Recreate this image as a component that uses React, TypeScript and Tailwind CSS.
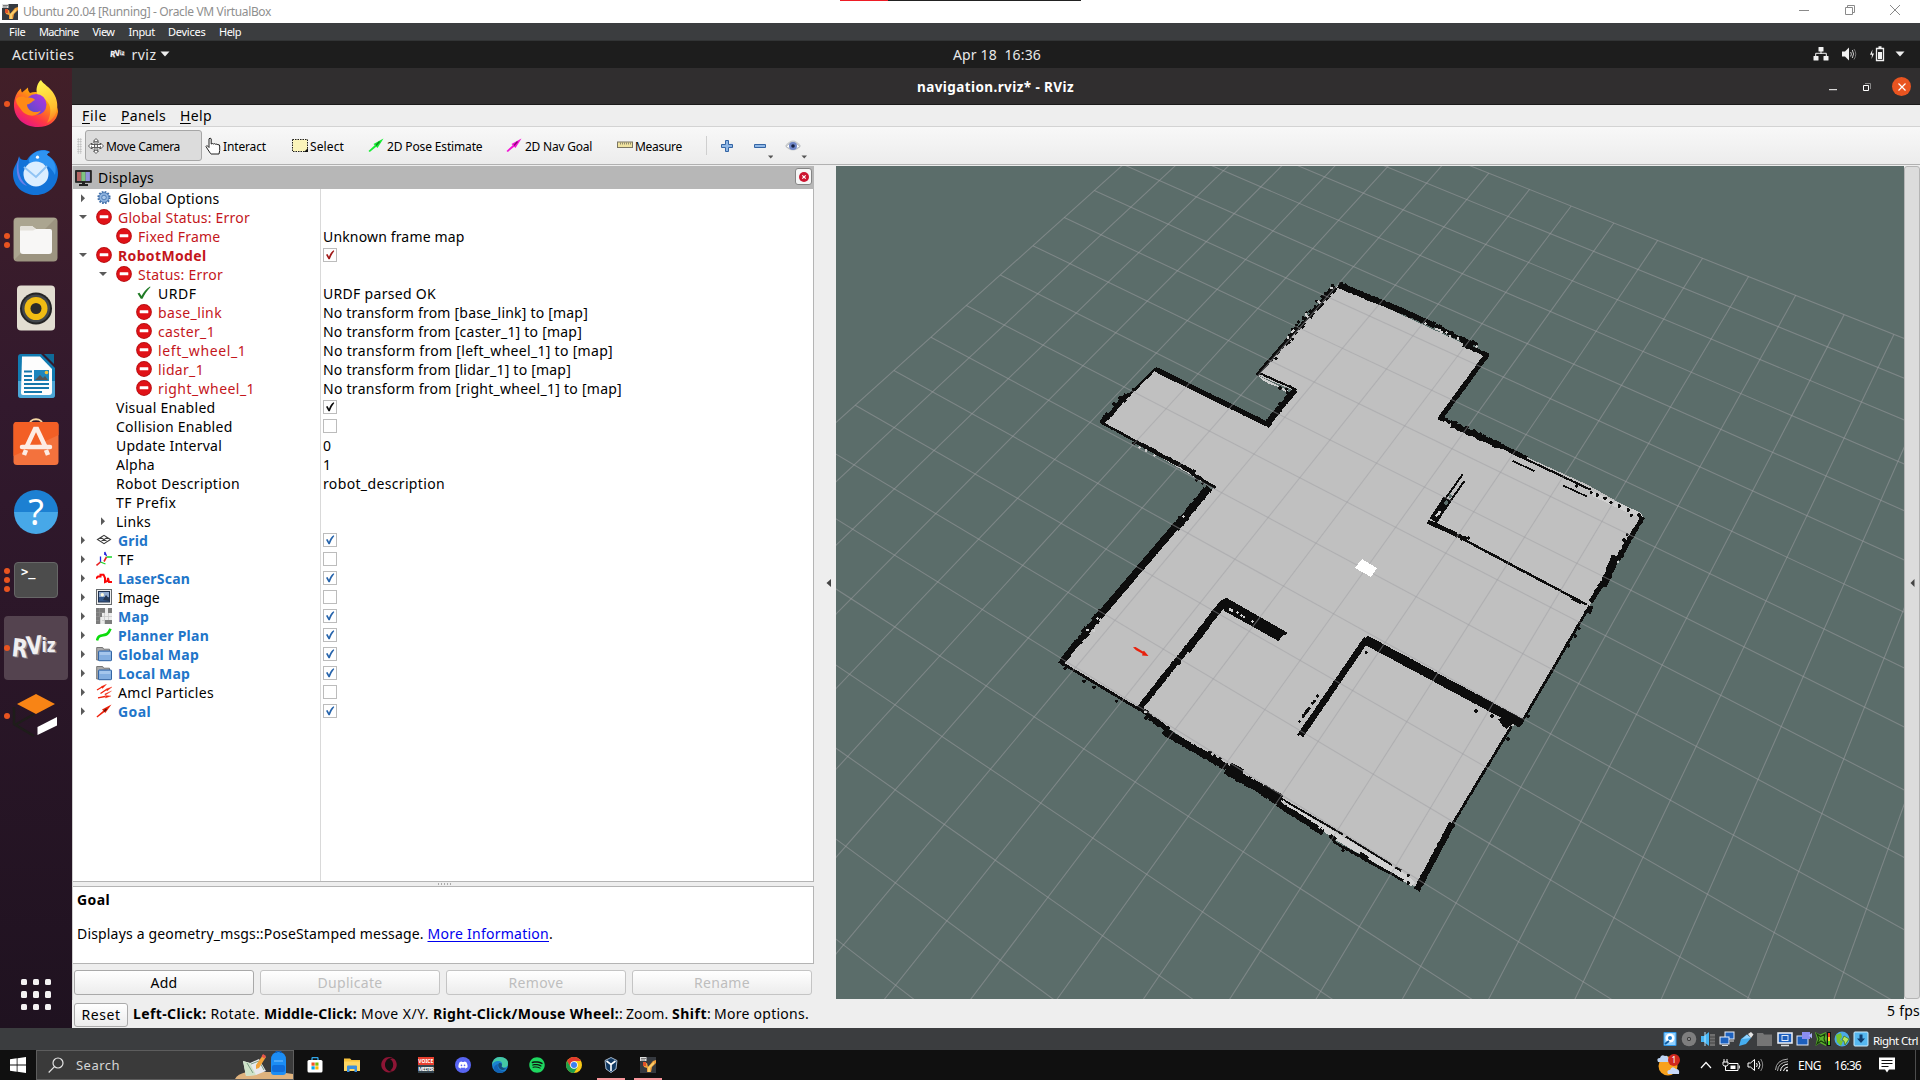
import React, { useLayoutEffect, useRef } from "react";
import { FaOpera, FaSpotify, FaDiscord } from "react-icons/fa";

/** Text that spreads its letters so that it takes exactly `w` pixels. */
function T({ w, className = "", children }: { w: number; className?: string; children: React.ReactNode }) {
  const ref = useRef<HTMLSpanElement>(null);
  useLayoutEffect(() => {
    const el = ref.current;
    if (!el) return;
    const fit = () => {
      el.style.letterSpacing = "0px";
      const natural = el.getBoundingClientRect().width;
      const count = (el.textContent || "").length;
      if (count > 0) el.style.letterSpacing = `${(w - natural) / count}px`;
    };
    fit();
    document.fonts?.ready.then(fit);
  }, [w]);
  return (
    <span ref={ref} className={`inline-block whitespace-pre ${className}`}>
      {children}
    </span>
  );
}

/* ---------------------------------------------------------------- 3D view */

function makeRandom(seed: number) {
  let s = seed;
  return () => {
    s = (s * 1103515245 + 12345) % 2147483648;
    return s / 2147483648;
  };
}

/** Outline of a wall whose two sides are stepped at random. */
function wall(x1: number, y1: number, x2: number, y2: number, w: number, rough = 2, seed = 7) {
  const rnd = makeRandom(seed + Math.round(x1 + y2));
  const len = Math.hypot(x2 - x1, y2 - y1);
  const ux = (x2 - x1) / len;
  const uy = (y2 - y1) / len;
  const steps = Math.max(1, Math.round(len / 10));
  const side = (sign: number) => {
    const pts: string[] = [];
    for (let i = 0; i < steps; i++) {
      const off = sign * (w / 2 + (rnd() - 0.4) * rough);
      for (const k of [i, i + 1]) {
        const d = (k / steps) * len;
        pts.push(`${(x1 + ux * d - uy * off).toFixed(1)},${(y1 + uy * d + ux * off).toFixed(1)}`);
      }
    }
    return pts;
  };
  return [...side(1), ...side(-1).reverse()].join(" ");
}

type Seg = [number, number, number, number, number, number?];

const upperWalls: Seg[] = [
  [895, 75, 1060, 142, 18, 2],
  [1060, 142, 1185, 197, 17, 3],
  [1185, 197, 1300, 256, 14, 6],
  [1270, 254, 1345, 287, 11, 3],
  [886, 80, 773, 208, 13, 8],
  [773, 203, 733, 253, 12, 6],
  [740, 243, 650, 346, 11, 2],
  [660, 340, 770, 390, 6, 1],
  [764, 390, 678, 498, 18, 4],
  [345, 327, 682, 493, 15, 1],
  [347, 326, 262, 410, 7, 2],
  [268, 400, 185, 488, 15, 6],
  [183, 487, 290, 545, 7, 1],
  [285, 544, 465, 639, 12, 3],
  [455, 640, 527, 683, 9, 3],
  [508, 683, 405, 805, 23, 5],
  [412, 793, 180, 1066, 22, 1],
  [188, 1053, 108, 1155, 21, 7],
  [118, 1140, 61, 1212, 18, 2],
  [1342, 283, 1201, 475, 15, 1],
];
const rightWalls: Seg[] = [
  [176, 110, 230, 134, 12, 6],
  [215, 132, 360, 198, 18, 5],
  [350, 192, 440, 235, 12, 3],
  [430, 234, 632, 329, 6, 1],
  [398, 243, 463, 273, 5, 0],
  [548, 316, 622, 350, 5, 0],
  [248, 283, 190, 365, 6, 0],
  [254, 302, 212, 362, 6, 0],
  [203, 356, 160, 422, 26, 1],
  [143, 425, 230, 464, 13, 2],
  [225, 462, 258, 482, 9, 5],
  [250, 478, 620, 674, 7, 1],
  [575, 655, 605, 668, 10, 2],
  [789, 411, 735, 500, 14, 3],
  [742, 485, 715, 540, 15, 5],
  [708, 528, 670, 618, 23, 4],
  [670, 605, 632, 666, 15, 3],
  [630, 677, 624, 700, 15, 4],
  [625, 684, 420, 1036, 8, 1],
];
const lowerWalls: Seg[] = [
  [976, 239, 1444, 490, 28, 1],
  [1385, 470, 1410, 498, 30, 4],
  [980, 236, 782, 526, 19, 1],
  [1415, 498, 1235, 796, 8, 1],
  [1237, 790, 1130, 990, 19, 2],
  [552, 125, 440, 272, 22, 2],
  [445, 260, 295, 449, 18, 2],
  [60, 306, 300, 450, 8, 1],
  [300, 446, 400, 524, 14, 7],
  [370, 513, 560, 622, 21, 3],
  [558, 627, 722, 722, 29, 5],
  [570, 616, 608, 636, 18, 2],
  [668, 684, 725, 716, 24, 2],
  [712, 730, 850, 817, 18, 3],
  [720, 714, 910, 824, 6, 0],
  [918, 830, 1056, 915, 6, 0],
  [1066, 922, 1084, 932, 7, 1],
  [870, 825, 885, 842, 13, 3],
  [880, 845, 1090, 962, 8, 2],
  [958, 882, 982, 900, 16, 3],
];

const upperSpecks = [
  [878, 76], [868, 92], [905, 70], [917, 74], [858, 100], [846, 110], [830, 124], [826, 140], [812, 152], [800, 158],
  [790, 174], [776, 186], [770, 196], [757, 210], [752, 224], [758, 238], [748, 248], [708, 296], [1308, 252], [1300, 246],
  [280, 388], [262, 406], [240, 414], [222, 432], [200, 462], [184, 484], [282, 550], [470, 660], [488, 671], [420, 772],
  [416, 1210], [720, 384], [740, 388], [750, 380], [742, 398], [128, 1136], [74, 1226], [979, 1178], [720, 432], [704, 456],
];
const upperLight = [
  [836, 124], [838, 128], [802, 170], [798, 164], [760, 212], [756, 216], [744, 232], [1156, 190], [1190, 207], [1198, 210], [1205, 216], [1220, 218],
  [1230, 230], [1254, 236], [1310, 260], [298, 562], [318, 571], [344, 586], [430, 770], [172, 1076], [142, 1110], [162, 1112], [875, 84],
];
const rightSpecks = [
  [652, 345], [675, 355], [693, 368], [718, 378], [745, 390], [754, 406], [777, 405], [634, 338], [590, 318], [742, 464],
  [732, 480], [262, 142], [282, 152], [302, 162], [240, 468], [256, 474], [266, 474], [598, 746], [586, 768], [566, 800],
  [445, 1010], [288, 993], [336, 1008], [384, 1076], [564, 795],
];
const lowerSpecks = [
  [979, 278], [833, 408], [779, 485], [790, 468], [796, 460], [801, 453], [807, 446], [818, 430], [823, 424], [776, 524],
  [76, 326], [132, 364], [162, 382], [230, 424], [318, 474], [510, 577], [524, 588], [540, 596], [1307, 453], [1356, 467],
  [1465, 469], [1404, 537], [1105, 946], [1105, 969], [909, 872], [736, 220], [418, 310], [1231, 797],
];
const lowerLight = [
  [570, 148], [576, 151], [592, 158], [605, 167], [612, 171], [637, 184], [730, 724], [316, 456], [838, 802], [848, 806], [856, 812],
];

function Specks({ at, fill, size = 8 }: { at: number[][]; fill: string; size?: number }) {
  return (
    <g fill={fill}>
      {at.map(([x, y], i) => (
        <path key={i} d={`M${x - size / 2} ${y - size / 4}h${size / 4}v${-size / 4}h${size / 2}v${size / 4}h${size / 4}v${size / 2}h${-size / 4}v${size / 4}h${-size / 2}v${-size / 4}h${-size / 4}z`} />
      ))}
    </g>
  );
}

function Walls({ list }: { list: Seg[] }) {
  return (
    <g fill="#0d0d0d">
      {list.map((s, i) => (
        <polygon key={i} points={wall(s[0], s[1], s[2], s[3], s[4], s[5])} />
      ))}
    </g>
  );
}

/** Crossing of grid line n (up-right) with grid line m (down-right). */
function crossing(n: number, m: number) {
  const xb = 1402.4 + 86.3 * n;
  const sb = -0.559 + 0.0396 * n;
  const xa = 1471.5 + 139.5 * m;
  const sa = 1.55 + 0.0642 * m;
  const t = (xb - xa) / (sa - sb);
  return [xb + sb * t, 999 + t];
}

function View3D() {
  const lines: number[][] = [];
  for (let n = -14; n <= 6; n++) lines.push([...crossing(n, -5), ...crossing(n, 15)]);
  for (let m = -5; m <= 15; m++) lines.push([...crossing(-14, m), ...crossing(6, m)]);
  return (
    <svg viewBox="836 166 1068 833" className="block h-[833px] w-[1068px] bg-[#5b6d6a]">
      <g shapeRendering="crispEdges">
        <polygon
          fill="#c0c0c0"
          points="1338,285 1488,355 1441,418 1588,485 1643,516 1589,607 1520,723 1510,727 1417,888 1280,802 1227,768 1140,709 1061,662 1213,488 1102,423 1156,369 1266,426 1295,391 1257,375"
        />
        <g transform="translate(1040 260) scale(0.33333)">
          <polygon fill="#cfcfcf" points="652,346 745,392 740,398 712,380 698,375 690,373 670,362" />
          <Walls list={upperWalls} />
          <Specks at={upperSpecks} fill="#0d0d0d" size={10} />
          <Specks at={upperLight} fill="#cfcfcf" />
        </g>
        <g transform="translate(1380 380) scale(0.33333)">
          <polygon fill="#cfcfcf" points="632,332 700,361 780,397 790,410 760,406 640,350" />
          <Walls list={rightWalls} />
          <Specks at={rightSpecks} fill="#0d0d0d" size={10} />
          <Specks at={[[179, 396], [170, 406], [176, 402], [714, 546]]} fill="#d0d0d0" />
          <Specks at={[[198, 369], [200, 366], [211, 348]]} fill="#5b6d6a" size={10} />
        </g>
        <g transform="translate(1040 560) scale(0.33333)">
          <polygon fill="#d2d2d2" points="738,728 1100,945 1126,968 1114,979 1040,930 880,836 850,814 745,742" />
          <polygon fill="#0d0d0d" points="545,120 560,114 742,218 728,228 715,243 552,152" />
          <Walls list={lowerWalls} />
          <Specks at={lowerSpecks} fill="#0d0d0d" size={10} />
          <Specks at={lowerLight} fill="#d2d2d2" />
        </g>
      </g>
      <g stroke="#a0a0a4" strokeOpacity="0.5" strokeWidth="1.1">
        {lines.map(([x1, y1, x2, y2], i) => (
          <line key={i} x1={x1} y1={y1} x2={x2} y2={y2} />
        ))}
      </g>
      <polygon fill="#fff" points="1362,559 1377,568 1371,577 1355,568" shapeRendering="crispEdges" />
      <path d="M1133 647.300l2.500-.3 7.500 4.500 1-.8 4.500 5.300-6.500-.4.600-1.800-6.500-3.600z" fill="#e8200c" />
    </svg>
  );
}

/* ------------------------------------------------------------- tree icons */

function ErrorIcon() {
  return (
    <svg viewBox="0 0 16 16" className="size-4">
      <circle cx="8" cy="8" r="7.900" fill="#b80d10" />
      <circle cx="8" cy="8" r="7" fill="#e01217" />
      <rect x="3.700" y="6.300" width="8.600" height="3" rx=".5" fill="#fff" />
    </svg>
  );
}
const treeIcons: Record<string, React.ReactNode> = {
  error: <ErrorIcon />,
  gear: (
    <svg viewBox="0 0 16 16" className="size-4">
      <circle cx="8" cy="7.500" r="5.600" fill="none" stroke="#3f6ea9" strokeWidth="2" strokeDasharray="1.700 1.230" />
      <circle cx="8" cy="7.500" r="4.900" fill="#8fb4e0" stroke="#3f6ea9" strokeWidth=".8" />
      <circle cx="8" cy="7.500" r="2.300" fill="#a9c7ea" stroke="#3f6ea9" strokeWidth=".8" />
    </svg>
  ),
  ok: (
    <svg viewBox="0 0 16 16" className="size-4">
      <path d="M1.500 8.500l2-.8 2 3.300C7.500 7 10 4 14 1.500l.5.500C10.800 6 8.500 9.500 6.500 13.800H4.800z" fill="#1f7a25" />
    </svg>
  ),
  grid: (
    <svg viewBox="0 0 16 16" className="size-4" fill="none" stroke="#3d3d3d" strokeWidth="1.100">
      <path d="M1.500 7.500L8 3.300l6.500 4.200L8 11.700zM4.700 5.400l6.600 4.200M11.300 5.400L4.700 9.600" />
    </svg>
  ),
  tf: (
    <svg viewBox="0 0 16 16" className="size-4" fill="none" strokeWidth="1.300">
      <path d="M4.500 11V5.500M10.500 5L8.800 1v3" stroke="#2222e0" />
      <path d="M4.500 11l-4 3.500M10.500 6L8 10.500" stroke="#e82020" strokeWidth="1.600" />
      <path d="M4.500 11l5 2M10.500 6H16" stroke="#19d52a" />
    </svg>
  ),
  laser: (
    <svg viewBox="0 0 16 16" className="size-4" fill="none" stroke="#fb0707" strokeWidth="2">
      <path d="M0 8.500l2-2h2.500v-1.800h3L9 8v4l2.500-1 .5-3 1 4h3" />
    </svg>
  ),
  image: (
    <svg viewBox="0 0 16 16" className="size-4">
      <rect x=".5" y=".5" width="15" height="15" fill="#eee" stroke="#666a6c" />
      <rect x="2.500" y="2.500" width="11" height="10.500" fill="#35588c" stroke="#20324f" />
      <rect x="3" y="3" width="10" height="5" fill="#91abd0" />
      <circle cx="6.300" cy="5.800" r="1.700" fill="#fffce0" />
      <path d="M7 11l3-5 3 3.500V12z" fill="#27374f" />
    </svg>
  ),
  map: (
    <svg viewBox="0 0 16 16" className="size-4" shapeRendering="crispEdges">
      <path d="M9 0h4v4H9zM6 4h10v4H6zM4 8h12v4H4zM4 12h6v4H4z" fill="#ececec" />
      <path d="M4 8v8M8 4v12M12 4v12M4 8h12M6 12h10" stroke="#c4c4c4" strokeWidth=".7" />
      <path d="M0 0h9v5H6v4H4v7H0zM12 0h4v5h-4zM9 12h7v4H9z" fill="#7c7c7c" />
      <path d="M3 0v8M0 4h9M0 8h4M0 12h3" stroke="#969696" strokeWidth=".6" />
    </svg>
  ),
  path: (
    <svg viewBox="0 0 16 16" className="size-4" fill="none" stroke="#0ddc0d" strokeWidth="2.600">
      <path d="M1 13.500C2 9 4 8.700 7 8.200s5-.5 7.500-6.500" />
    </svg>
  ),
  folder: (
    <svg viewBox="0 0 16 16" className="size-4">
      <path d="M.7 14V1.500h6l1 1.700h5.800V14z" fill="#aaa" stroke="#777" />
      <rect x="2.500" y="5" width="13" height="9.700" rx=".6" fill="#83aee0" stroke="#3465a4" />
      <rect x="3.500" y="6" width="11" height="3" fill="#a5c6ec" />
    </svg>
  ),
  particles: (
    <svg viewBox="0 0 16 16" className="size-4" stroke="#f0210b" strokeWidth="1.300" fill="#f0210b">
      <path d="M1 6L6 3M4.500 9.500l6-4M2 13.800l7-1.300" />
      <path d="M10.500.3L6.500 4.500 5.300 2.500zM16 3l-5 4-1-2zM15 12l-5.500 2-.2-2.500zM15.500 7l-6 4-.8-1z" strokeWidth=".3" />
    </svg>
  ),
  goal: (
    <svg viewBox="0 0 16 16" className="size-4">
      <path d="M.5 13.500l7-6 1.300 1.300-7.500 5.700z" fill="#f0210b" />
      <path d="M6 6.500l9.500-5L9.300 10z" fill="#e81f08" />
      <path d="M8 8.500l2.500-2.500" stroke="#53150c" strokeWidth="1.400" />
    </svg>
  ),
};

function Arrow({ open }: { open: boolean }) {
  return (
    <svg viewBox="0 0 10 10" className="size-[10px]">
      {open ? <path d="M1 3h8L5 7z" fill="#5a5a5a" /> : <path d="M3 1.200v8L7 5.200z" fill="#5a5a5a" />}
    </svg>
  );
}

function Check({ on, color = "#2563ab" }: { on: boolean; color?: string }) {
  return (
    <span className="mb-px flex size-[14px] items-center justify-center border border-[#bcbcbc] bg-white">
      {on && (
        <svg viewBox="0 0 12 12" className="size-3">
          <path d="M2 5.700l1.500-.8L5 7.700C6 5 7.300 3 9.500 1.300L10.300 2C8.300 4.500 7 7 5.800 10.200H4.500z" fill={color} />
        </svg>
      )}
    </span>
  );
}

type Row = {
  d: number;
  a?: "o" | "c";
  i?: string;
  t: string;
  w: number;
  c?: "red" | "blue";
  b?: boolean;
  v?: string;
  vw?: number;
  k?: "on" | "off" | "red" | "black";
};
const rows: Row[] = [
  { d: 0, a: "c", i: "gear", t: "Global Options", w: 101.500 },
  { d: 0, a: "o", i: "error", t: "Global Status: Error", w: 132, c: "red" },
  { d: 1, i: "error", t: "Fixed Frame", w: 82.500, c: "red", v: "Unknown frame map", vw: 141.500 },
  { d: 0, a: "o", i: "error", t: "RobotModel", w: 88.500, c: "red", b: true, k: "red" },
  { d: 1, a: "o", i: "error", t: "Status: Error", w: 85, c: "red" },
  { d: 2, i: "ok", t: "URDF", w: 38.500, v: "URDF parsed OK", vw: 113 },
  { d: 2, i: "error", t: "base_link", w: 64, c: "red", v: "No transform from [base_link] to [map]", vw: 265 },
  { d: 2, i: "error", t: "caster_1", w: 57, c: "red", v: "No transform from [caster_1] to [map]", vw: 259 },
  { d: 2, i: "error", t: "left_wheel_1", w: 88.500, c: "red", v: "No transform from [left_wheel_1] to [map]", vw: 290 },
  { d: 2, i: "error", t: "lidar_1", w: 46, c: "red", v: "No transform from [lidar_1] to [map]", vw: 248 },
  { d: 2, i: "error", t: "right_wheel_1", w: 97, c: "red", v: "No transform from [right_wheel_1] to [map]", vw: 299 },
  { d: 1, t: "Visual Enabled", w: 99.500, k: "black" },
  { d: 1, t: "Collision Enabled", w: 116.500, k: "off" },
  { d: 1, t: "Update Interval", w: 106, v: "0", vw: 8.500 },
  { d: 1, t: "Alpha", w: 39, v: "1", vw: 8.500 },
  { d: 1, t: "Robot Description", w: 124, v: "robot_description", vw: 122 },
  { d: 1, t: "TF Prefix", w: 60.500 },
  { d: 1, a: "c", t: "Links", w: 35 },
  { d: 0, a: "c", i: "grid", t: "Grid", w: 30, c: "blue", b: true, k: "on" },
  { d: 0, a: "c", i: "tf", t: "TF", w: 16, k: "off" },
  { d: 0, a: "c", i: "laser", t: "LaserScan", w: 72, c: "blue", b: true, k: "on" },
  { d: 0, a: "c", i: "image", t: "Image", w: 41.500, k: "off" },
  { d: 0, a: "c", i: "map", t: "Map", w: 31, c: "blue", b: true, k: "on" },
  { d: 0, a: "c", i: "path", t: "Planner Plan", w: 91, c: "blue", b: true, k: "on" },
  { d: 0, a: "c", i: "folder", t: "Global Map", w: 81, c: "blue", b: true, k: "on" },
  { d: 0, a: "c", i: "folder", t: "Local Map", w: 72, c: "blue", b: true, k: "on" },
  { d: 0, a: "c", i: "particles", t: "Amcl Particles", w: 96, k: "off" },
  { d: 0, a: "c", i: "goal", t: "Goal", w: 33, c: "blue", b: true, k: "on" },
];

function TreeRow({ r }: { r: Row }) {
  const indent = ["w-0", "w-5", "w-10"][r.d];
  const color = r.c === "red" ? "text-[#c4161c]" : r.c === "blue" ? "text-[#2175c9]" : "text-black";
  return (
    <div className="flex h-[19px] items-center">
      <div className="flex h-[19px] w-[247px] shrink-0 items-center pl-[5px]">
        <span className={`${indent} shrink-0`} />
        <span className="flex w-[18px] shrink-0 pb-px">{r.a && <Arrow open={r.a === "o"} />}</span>
        {r.i ? <span className="mr-[6px] shrink-0 pb-[2px]">{treeIcons[r.i]}</span> : null}
        <T w={r.w} className={`${color} ${r.b ? "font-bold" : ""}`}>{r.t}</T>
      </div>
      <div className="flex h-[19px] items-center pl-[3px]">
        {r.v && <T w={r.vw || 0}>{r.v}</T>}
        {r.k && <Check on={r.k !== "off"} color={r.k === "red" ? "#a01818" : r.k === "black" ? "#0a0a0a" : "#2563ab"} />}
      </div>
    </div>
  );
}

/* -------------------------------------------------------------- dock icons */

function RvizLetters({ fill }: { fill: string }) {
  return (
    <g fill={fill}>
      <text x="0" y="25" fontSize="25" textLength="16" lengthAdjust="spacingAndGlyphs" transform="rotate(6 8 16)">R</text>
      <text x="14.500" y="22" fontSize="25" textLength="16" lengthAdjust="spacingAndGlyphs" transform="rotate(-6 22 16)">V</text>
      <text x="29.500" y="20" fontSize="19" textLength="14" lengthAdjust="spacingAndGlyphs">iz</text>
    </g>
  );
}

function RvizLogo({ className }: { className: string }) {
  return (
    <svg viewBox="0 -2 48 36" className={className} fontFamily="'DejaVu Sans Condensed','DejaVu Sans'" fontWeight="700">
      <g transform="translate(1.500 1)"><RvizLetters fill="#8b838c" /></g>
      <RvizLetters fill="#f1f0f1" />
    </svg>
  );
}

const dock: { dots: number; active?: boolean; icon: React.ReactNode }[] = [
  {
    dots: 1,
    icon: (
      <svg viewBox="0 0 48 48" className="size-12">
        <defs>
          <linearGradient id="ff" x1="1" y1="0" x2=".3" y2="1">
            <stop offset="0" stopColor="#fff44f" /><stop offset=".4" stopColor="#ff980e" /><stop offset=".75" stopColor="#ff3647" /><stop offset="1" stopColor="#e31587" />
          </linearGradient>
          <linearGradient id="ffy" x1=".4" y1="0" x2=".6" y2="1">
            <stop offset="0" stopColor="#fff44f" /><stop offset=".7" stopColor="#ffbd2e" /><stop offset="1" stopColor="#ff7b22" />
          </linearGradient>
          <linearGradient id="ffp" x1="1" y1="0" x2="0" y2="1">
            <stop offset="0" stopColor="#b833e1" /><stop offset="1" stopColor="#4b50c8" />
          </linearGradient>
        </defs>
        <path d="M2 23C3 15 6 11 9 8.500c0 2 .5 3 1 4l6-5c0 2.500.5 4 2 5.500 5-2 13-1 19 5 6 4 9 9 9 14-1 9-9 15-20 15C11 47 1 37 2 23z" fill="url(#ff)" />
        <path d="M29 0c2 4 9 7 13 14 6 10 4 23-7 29 3-6 4-11 3-16-2-8-8-9-12-12-3-4-1-12 3-15z" fill="url(#ffy)" />
        <circle cx="24" cy="24.500" r="10.500" fill="url(#ffp)" />
        <path d="M4 19c3-3 7-3 10-1 4-1 8 0 9 2-3 1-4 4-8 4.500 0 6 8 10 14 6-3 7-15 7-20-1-3-4-5-6-5-10.500z" fill="#ff8a16" />
      </svg>
    ),
  },
  {
    dots: 0,
    icon: (
      <svg viewBox="0 0 48 48" className="mt-[2px] size-12">
        <path d="M7 7c1 4 4 4 8 4C21 1 32-1 38 3c-2 1-3 2-3 3 8 4 11 12 11 18 0 13-10 22-22 22S1 38 1 25C1 17 6 14 7 7z" fill="#1273d8" />
        <path d="M18 8c5-7 14-8 20-5-2 1-3 2-3 3 8 5 10 12 8 20C38 15 30 14 22 16c-4-1-7-3-4-8z" fill="#2e94f2" />
        <path d="M7 8c-1 9-2 20 8 29-9-3-13-14-8-29z" fill="#6a7ee8" />
        <circle cx="24" cy="25" r="12.500" fill="#dbeeff" />
        <path d="M12 18l12 10 11-11" fill="none" stroke="#90c4f4" strokeWidth="2" />
        <circle cx="25.500" cy="8.200" r="1.600" fill="#fff" />
      </svg>
    ),
  },
  {
    dots: 2,
    icon: (
      <svg viewBox="0 0 46 46" className="size-[46px]">
        <rect x=".5" y=".5" width="44" height="44" rx="4" fill="#9c9480" />
        <path d="M1 5a4 4 0 014-4h38L1 43z" fill="#aba590" />
        <path d="M7 34V11q0-2 2-2h10l4 3h14q2 0 2 2v20q0 3-3 3H10q-3 0-3-3z" fill="#f8f7f6" />
        <path d="M7 34V11q0-2 2-2h10l4 3-3 1.500H7z" fill="#e4e1da" />
      </svg>
    ),
  },
  {
    dots: 0,
    icon: (
      <svg viewBox="0 0 46 46" className="size-[46px]">
        <rect x="4" y=".5" width="38" height="45" rx="4" fill="#e2ddd1" />
        <circle cx="23" cy="23.500" r="16" fill="#242424" />
        <circle cx="23" cy="23.500" r="14" fill="#42474c" />
        <circle cx="23" cy="23.500" r="11.500" fill="#f0bc13" />
        <circle cx="23" cy="23.500" r="5.500" fill="#2b2b2b" />
      </svg>
    ),
  },
  {
    dots: 0,
    icon: (
      <svg viewBox="0 0 46 46" className="size-[46px]">
        <path d="M8 1h20l14 14v27q0 3-3 3H8q-3 0-3-3V4q0-3 3-3z" fill="#117bb1" />
        <path d="M5 28h37v14q0 3-3 3H8q-3 0-3-3z" fill="#4ba6d6" />
        <path d="M9 3.500h18L39 16v23q0 3-3 3H10q-2 0-2-2z" fill="#fdfdfd" />
        <path d="M31 1h10v10z" fill="#0f6a98" />
        <path d="M11 18.500h8M11 23h8M11 27h8M11 31h25M11 35h25M11 39h18" stroke="#1577ab" strokeWidth="2" />
        <rect x="21" y="17" width="15" height="11" fill="#1e86bd" />
        <path d="M22 27l5-5 3 3 2-2 3 4z" fill="#555" />
        <circle cx="33.500" cy="19.500" r="1.800" fill="#f5c338" />
      </svg>
    ),
  },
  {
    dots: 0,
    icon: (
      <svg viewBox="0 0 46 50" className="-mt-[6px] h-[50px] w-[46px]">
        <path d="M16 10C16 1 30 1 30 10" fill="none" stroke="#f5d7a4" strokeWidth="2" />
        <rect x=".5" y="6" width="45" height="43" rx="3.500" fill="#f3723d" />
        <path d="M.5 9q0-3 3-3h39q3 0 3 3v10L.5 40z" fill="#f35f25" />
        <path d="M14 30l8-17h2l8 17M13 34l-2 5M33 34l2 5" fill="none" stroke="#fdece4" strokeWidth="4.500" />
        <path d="M9 31h28" stroke="#fdece4" strokeWidth="4.500" strokeLinecap="round" />
      </svg>
    ),
  },
  {
    dots: 0,
    icon: (
      <div className="flex size-11 items-center justify-center rounded-full bg-linear-to-b from-[#1c80d2] from-50% to-[#47a8e8] to-50% text-[36px] leading-none text-white">?</div>
    ),
  },
  {
    dots: 3,
    icon: (
      <div className="h-9 w-11 rounded-[4px] border border-[#676767] bg-[#4c4c4c] pl-[6px] font-['DejaVu_Sans_Mono'] text-[12px] leading-[18px] font-bold text-white">&gt;_</div>
    ),
  },
  { dots: 1, active: true, icon: <RvizLogo className="h-9 w-12" /> },
  {
    dots: 1,
    icon: (
      <svg viewBox="0 0 48 48" className="size-12">
        <path d="M2 15v17l20 12M22 22L3 33" fill="none" stroke="#1e1d1a" strokeWidth="2.500" />
        <path d="M24 2L43 12 24 22 5 12z" fill="#f88415" />
        <path d="M25.500 35L45 25v8.500L25.500 43z" fill="#fff" />
      </svg>
    ),
  },
];

/* ------------------------------------------------------------- small parts */

function PoseIcon({ color }: { color: string }) {
  return (
    <svg viewBox="0 0 16 16" className="-mt-px -ml-px mr-px size-4">
      <path d="M.5 14L7 8l1.500 1.500L1.800 15z" fill={color} />
      <path d="M5.500 7L15.500 1.500 9.500 11z" fill={color} />
      <path d="M8 8.500l3.500-4" stroke="#000" strokeOpacity=".45" strokeWidth="1.300" />
    </svg>
  );
}

function ToolText({ w, children }: { w: number; children: string }) {
  return <T w={w} className="mt-px ml-[2px] text-[12px] text-black">{children}</T>;
}

function PanelButton({ label, w, disabled }: { label: string; w: number; disabled?: boolean }) {
  return (
    <div className={`flex h-[25px] w-[180px] items-center justify-center rounded-[3px] border bg-linear-to-b from-white to-[#ececec] ${disabled ? "border-[#c4c4c4] text-[#bebebe]" : "border-[#a9a9a9] text-black"}`}>
      <T w={w}>{label}</T>
    </div>
  );
}

function VmIcon({ className }: { className: string }) {
  return (
    <svg viewBox="0 0 16 16" className={className}>
      <rect width="16" height="16" fill="#35393f" />
      <path d="M3 7l4-1 1 4 5-6 3-1v3l-4 4-1 5H7V11L4 10z" fill="#f0a03c" />
      <path d="M8 10l6-5v2l-4 4v4H8z" fill="#f9cf6a" />
      <path d="M3 5h3v4H3z" fill="#e0522a" />
      <path d="M0 0h6.500v4H0z" fill="#ddd" />
      <path d="M1 1.500h5M1 3h4" stroke="#555" strokeWidth=".7" />
    </svg>
  );
}

const statusIcons: React.ReactNode[] = [
  <svg key="hd" viewBox="0 0 16 16" className="size-4"><rect x="1.500" y="1" width="13" height="14" rx="1" fill="#2f97e8" /><rect x="2.500" y="2" width="11" height="12" fill="#8fd0ff" /><circle cx="8" cy="7" r="4.500" fill="#fff" /><circle cx="8" cy="7" r="2" fill="#1d7fd0" /><path d="M3 13l4-3" stroke="#0f5ba0" strokeWidth="2" /></svg>,
  <svg key="cd" viewBox="0 0 16 16" className="size-4"><circle cx="8" cy="8" r="7.300" fill="#7e7e7e" /><circle cx="8" cy="8" r="2" fill="#333" /><circle cx="8" cy="8" r="1" fill="#aaa" /></svg>,
  <svg key="au" viewBox="0 0 16 16" className="size-4"><path d="M1 5h3l5-4v14l-5-4H1z" fill="#47b6f4" /><path d="M5 1v14" stroke="#b9e5ff" /><rect x="10" y="3" width="5" height="12" fill="#6f6f6f" /><path d="M10 6h5M10 9h5M10 12h5" stroke="#444" /></svg>,
  <svg key="nw" viewBox="0 0 16 16" className="size-4"><rect x="6" y="1" width="9" height="7" fill="#1d62c0" stroke="#e8eefa" /><rect x="1" y="6" width="9" height="7" fill="#1d62c0" stroke="#e8eefa" /><path d="M3 14.500h6M11 10h4" stroke="#ddd" /></svg>,
  <svg key="usb" viewBox="0 0 16 16" className="size-4"><path d="M1 15l2-7 6-4.500 4 3.500-5 6z" fill="#46aef0" /><path d="M4 8l5-4.500 4 3.500" fill="#93d4ff" /><path d="M10 3l3-2 2.500 2.500L13 7z" fill="#e6e6e6" /></svg>,
  <svg key="sf" viewBox="0 0 16 16" className="size-4"><path d="M0 2h6l1 1.500h8V15H0z" fill="#757575" /></svg>,
  <svg key="dp" viewBox="0 0 16 16" className="size-4"><rect x="1" y="2" width="14" height="10" fill="#1c5fbd" stroke="#f0f4fb" strokeWidth="1.500" /><rect x="5" y="4.500" width="6" height="5" fill="#1c5fbd" stroke="#dfe9f8" /><path d="M4 14.500h8" stroke="#ddd" strokeWidth="1.500" /></svg>,
  <svg key="rc" viewBox="0 0 16 16" className="size-4"><rect x="1" y="5" width="11" height="9" fill="#1c5fbd" stroke="#e4ecf9" /><rect x="6" y="1" width="8" height="7" fill="#8b8ef0" /><path d="M12.500 4.500L16 2v5.500z" fill="#aaaef8" /></svg>,
  <svg key="cpu" viewBox="0 0 16 16" className="size-4"><path d="M0 1l5 2.500L11 1l1 6-1 8-6-3-4.500 3L2 8z" fill="#58b02a" /><path d="M2 3l3.500 2.500L10 3 9 8l2 5-5-3-4 3 2-5z" fill="none" stroke="#173c0b" strokeWidth="1.100" /><path d="M12 1h4v14h-4z" fill="#111" /><path d="M13 2h2v4h-2z" fill="#f33a1c" /><path d="M13 6h2v4h-2z" fill="#f6d429" /><path d="M13 10h2v4h-2z" fill="#50d31c" /></svg>,
  <svg key="ms" viewBox="0 0 16 16" className="size-4"><circle cx="8" cy="8" r="7.500" fill="#4ba9e6" /><path d="M2 4l5-2 1 4-2 3 3 1-2 5-4-4z" fill="#78c52e" /><path d="M10 5l5 3-4 6-1-4-2-1z" fill="#b6e35a" stroke="#367710" strokeWidth=".7" /></svg>,
  <svg key="kb" viewBox="0 0 16 16" className="size-4"><rect x="1" y="1" width="14" height="14" rx="1" fill="#56b8f0" stroke="#cdeeff" /><path d="M6.500 3.500h3v4H12l-4 4.500-4-4.500h2.500z" fill="#0f3d6e" /></svg>,
];

function TaskIcon({ children, active }: { children: React.ReactNode; active?: boolean }) {
  return (
    <div className="flex h-[30px] w-[37.100px] flex-col items-center justify-between">
      <div className="flex h-[28px] items-center justify-center pt-[2px]">{children}</div>
      <div className={`h-[2px] w-7 ${active ? "bg-[#f8969b]" : ""}`} />
    </div>
  );
}

/* --------------------------------------------------------------------- app */

export default function App() {
  return (
    <div className="flex h-[1080px] w-[1920px] flex-col overflow-hidden bg-[#eeeeee] font-['Noto_Sans','Open_Sans',sans-serif] text-[14px] leading-[19px] text-black">
      {/* host window title */}
      <div className="relative flex h-[23px] shrink-0 items-center bg-white pl-[2px]">
        <div className="absolute top-0 left-[840px] flex h-px">
          <div className="w-12 bg-[#ee1c25]" />
          <div className="w-[193px] bg-[#222]" />
        </div>
        <VmIcon className="size-4" />
        <T w={248} className="ml-[5px] text-[12px] text-[#8f8f8f]">Ubuntu 20.04 [Running] - Oracle VM VirtualBox</T>
        <div className="ml-auto flex w-[121px] items-center justify-between pr-[20px] pb-[3px] text-[#8a8a8a]">
          <svg viewBox="0 0 10 10" className="size-[10px]" stroke="currentColor"><path d="M0 5.500h10" /></svg>
          <svg viewBox="0 0 10 10" className="size-[10px]" stroke="currentColor" fill="none"><path d="M.5 2.500h7v7h-7zM2.500 2.500v-2h7v7h-2" /></svg>
          <svg viewBox="0 0 10 10" className="size-[10px]" stroke="currentColor"><path d="M0 0l10 10M10 0L0 10" /></svg>
        </div>
      </div>
      {/* host menu */}
      <div className="flex h-[18px] shrink-0 items-center border-b border-[#323435] bg-[#3b3d3f] pl-[9px] text-[11px] text-white">
        <T w={16.500} className="mr-[13.500px]">File</T>
        <T w={39.500} className="mr-[14px]">Machine</T>
        <T w={22} className="mr-[14px]">View</T>
        <T w={26.500} className="mr-[13px]">Input</T>
        <T w={37.500} className="mr-[13.500px]">Devices</T>
        <T w={22}>Help</T>
      </div>
      {/* guest top bar */}
      <div className="grid h-[27px] shrink-0 grid-cols-[1fr_auto_1fr] items-center bg-[#1d1d1d] pb-px text-[#e8e8e8]">
        <div className="flex items-center pl-[12px]">
          <T w={62.500}>Activities</T>
          <RvizLogo className="ml-[35px] h-3 w-4" />
          <T w={25} className="ml-[6px]">rviz</T>
          <svg viewBox="0 0 10 10" className="ml-[3px] size-[10px]"><path d="M.5 2.500h9L5 7.500z" fill="#eee" /></svg>
        </div>
        <div className="pl-[74px]"><T w={88}>Apr 18  16:36</T></div>
        <div className="flex items-center justify-end gap-[12px] pr-[15px]">
          <svg viewBox="0 0 16 16" className="size-4" fill="#f2f2f2"><rect x="5.500" y="1" width="5" height="4.500" rx=".5" /><rect x=".5" y="10" width="5" height="4.500" rx=".5" /><rect x="10.500" y="10" width="5" height="4.500" rx=".5" /><path d="M2.700 10V7.300h10.600V10M8 5v3" fill="none" stroke="#f2f2f2" /></svg>
          <svg viewBox="0 0 16 16" className="size-4"><path d="M1 5.500h3L8 1.500v13L4 10.500H1z" fill="#f2f2f2" /><path d="M9.700 6q1.300 2 0 4.500M11.300 4q2.500 4 0 8" stroke="#ccc" fill="none" /><path d="M13 3q3.500 5 0 10.500" stroke="#777" fill="none" /></svg>
          <svg viewBox="0 0 16 16" className="size-4"><path d="M3.500 3.500L1 8.700h2L2.500 13 5 7.500H3z" fill="#f2f2f2" /><path d="M7.500 2.500h7v12h-7zM9.500 1h3" fill="none" stroke="#f2f2f2" strokeWidth="1.300" /><path d="M9 6h4v7H9z" fill="#f2f2f2" /></svg>
          <svg viewBox="0 0 10 10" className="-ml-[2px] size-[10px]"><path d="M.5 2.500h9L5 7.500z" fill="#eee" /></svg>
        </div>
      </div>

      <div className="flex h-[960px] shrink-0">
        {/* dock */}
        <div className="flex w-[72px] shrink-0 flex-col bg-linear-to-b from-[#421f28] via-[#32192d] via-35% to-[#1f1220] pt-[2px]">
          {dock.map((item, i) => (
            <div key={i} className="flex h-[68px] shrink-0 items-center">
              <div className="z-10 flex w-[14px] shrink-0 flex-col items-center gap-[3px] pr-px">
                {Array.from({ length: item.dots }, (_, k) => (
                  <span key={k} className="size-[6px] rounded-full bg-[#e95420]" />
                ))}
              </div>
              <div className={`-ml-[10px] flex h-16 w-16 shrink-0 items-center justify-center rounded-[4px] ${item.active ? "bg-[#54434f]" : ""}`}>{item.icon}</div>
            </div>
          ))}
          <div className="mt-auto mb-[18px] ml-[20.500px] grid w-[31px] grid-cols-3 gap-[6px]">
            {Array.from({ length: 9 }, (_, k) => (
              <span key={k} className="size-[6.300px] rounded-[1.500px] bg-[#f4f2f3]" />
            ))}
          </div>
        </div>

        {/* guest window */}
        <div className="flex w-[1848px] flex-col bg-[#eeeeee]">
          <div className="grid h-[37px] shrink-0 grid-cols-[1fr_auto_1fr] items-center border-b border-[#1b1a1a] bg-[#302e2f] pt-px text-white">
            <span />
            <div className="mr-px"><T w={157} className="text-[13.500px] font-bold">navigation.rviz* - RViz</T></div>
            <div className="flex items-center justify-end pr-[9px]">
              <svg viewBox="0 0 10 10" className="mr-[24px] size-[10px]"><path d="M1 7.700h8" stroke="#fff" strokeWidth="1" /></svg>
              <svg viewBox="0 0 10 10" className="mr-[20px] size-[10px]"><path d="M1.500 3.500h5v5h-5z" fill="none" stroke="#fff" /><path d="M3 1.500h5.500V7" fill="none" stroke="#888" /></svg>
              <div className="flex size-[19px] items-center justify-center rounded-full bg-[#e95420]">
                <svg viewBox="0 0 8 8" className="size-2"><path d="M.5.500l7 7M7.500.500l-7 7" stroke="#fff" strokeWidth="1.200" /></svg>
              </div>
            </div>
          </div>
          {/* menus */}
          <div className="flex h-[22px] shrink-0 items-center border-b border-[#d3d3d3] pl-[10px]">
            <T w={25} className="mr-[14px]"><u className="underline-offset-2">F</u>ile</T>
            <T w={45} className="mr-[14px]"><u className="underline-offset-2">P</u>anels</T>
            <T w={32}><u className="underline-offset-2">H</u>elp</T>
          </div>
          {/* toolbar */}
          <div className="flex h-[38px] shrink-0 items-center border-b border-[#b1b1b1] bg-linear-to-b from-[#f8f8f8] to-[#ececec]">
            <div className="ml-[5px] h-4 w-[5px] bg-[radial-gradient(#b5b5b5_0.8px,transparent_0.9px)] bg-[size:2.500px_2.500px]" />
            <div className="ml-[3px] flex h-[31px] w-[117px] items-center rounded-[3px] border border-[#a6a6a6] bg-[#dcdcdc] pl-[2px]">
              <svg viewBox="0 0 16 16" className="size-4" fill="#fff" stroke="#4a4a4a" strokeWidth=".9">
                <path d="M8 .6L10.500 3H9v3.500h3.500V5l3 3-3 3V9.500H9V13h1.500L8 15.500 5.500 13H7V9.500H3.500V11l-3-3 3-3v1.500H7V3H5.500z" />
                <circle cx="8" cy="8" r="4.500" fill="none" strokeDasharray="1.500 1" />
                <circle cx="8" cy="8" r="1.600" />
              </svg>
              <ToolText w={74}>Move Camera</ToolText>
            </div>
            <div className="flex w-[86px] items-center pl-[3px]">
              <svg viewBox="0 0 16 18" className="h-[18px] w-4"><path d="M5.500 16.500L2.500 12 1 9.500l1-1 2 2V1.800q1.100-1.300 2.200 0V7q1.200-1 2.200 0 1.400-.9 2.300.3 1.400-.6 2.200.4 1.800-.4 1.800 1.300v4.500L14 17H6z" fill="#fff" stroke="#222" /></svg>
              <ToolText w={43}>Interact</ToolText>
            </div>
            <div className="flex w-[77px] items-center pl-1">
              <svg viewBox="0 0 16 14" className="h-[14px] w-4"><rect x=".5" y=".5" width="15" height="12" fill="#fbf4ba" stroke="#222" strokeDasharray="1.500 1" /><path d="M12 13h4V9z" fill="#111" /></svg>
              <ToolText w={34}>Select</ToolText>
            </div>
            <div className="flex w-[138px] items-center pl-1"><PoseIcon color="#16ee32" /><ToolText w={95.500}>2D Pose Estimate</ToolText></div>
            <div className="flex w-[110px] items-center pl-1"><PoseIcon color="#f312d5" /><ToolText w={67}>2D Nav Goal</ToolText></div>
            <div className="flex w-[94px] items-center pl-1">
              <svg viewBox="0 0 16 8" className="mb-px h-2 w-4"><rect x=".5" y="1" width="15" height="5.500" fill="#f0e3a0" stroke="#7a7561" /><path d="M3.500 1.500v2M5.500 1.500v2M7.500 1.500v2M9.500 1.500v2M11.500 1.500v2M13.500 1.500v2" stroke="#7a7561" strokeWidth=".8" /></svg>
              <ToolText w={47}>Measure</ToolText>
            </div>
            <div className="-ml-px h-[19px] w-px bg-[#cfcfcf]" />
            <svg viewBox="0 0 12 12" className="ml-[14px] size-3"><path d="M4.500.500h3v4h4v3h-4v4h-3v-4h-4v-3h4z" fill="#8fb7e6" stroke="#3465a4" /></svg>
            <svg viewBox="0 0 20 26" className="ml-[20px] h-[26px] w-5"><path d="M1.500 11.500h11v3h-11z" fill="#8fb7e6" stroke="#3465a4" /><path d="M15 22.500h5.500l-2.750 3z" fill="#555" /></svg>
            <svg viewBox="0 0 22 26" className="ml-[12px] h-[26px] w-[22px]"><path d="M0 13Q8 2 16 13 8 22 0 13z" fill="#c9ccce" /><path d="M1 13.500Q8 6 15 13.500 8 19 1 13.500z" fill="#fff" stroke="#a9adb0" strokeWidth=".7" /><circle cx="8" cy="13" r="4" fill="#6f86c8" /><circle cx="8" cy="13" r="1.800" fill="#16203f" /><path d="M16.500 22.500H22l-2.750 3z" fill="#555" /></svg>
          </div>
          <div className="flex h-[835px] shrink-0 pt-px">
            {/* displays panel */}
            <div className="flex w-[742px] shrink-0 flex-col border-l border-[#cfcfcf]">
              <div className="flex h-[23px] shrink-0 items-center bg-[#b7b7b7] pl-[2px]">
                <svg viewBox="0 0 18 16" className="h-4 w-[18px]"><rect x=".7" y=".7" width="15.500" height="11.500" fill="#333" stroke="#111" /><path d="M2 2h4.300v9H2z" fill="#b46464" /><path d="M6.300 2h4.300v9H6.300z" fill="#80c480" /><path d="M10.600 2h4.300v9h-4.300z" fill="#9292dc" /><path d="M7 12h3v2h3v2H4v-2h3z" fill="#222" /></svg>
                <T w={56} className="ml-[5px]">Displays</T>
                <div className="mr-[2px] mb-[2px] ml-auto flex size-[17px] items-center justify-center rounded-[3px] border border-[#858585] bg-[#f6f6f6]">
                  <svg viewBox="0 0 10 10" className="size-[10px]"><circle cx="5" cy="5" r="5" fill="#cc1430" /><path d="M3.300 3.300l3.400 3.400M6.700 3.300L3.300 6.700" stroke="#fff" strokeWidth="1.200" /></svg>
                </div>
              </div>
              <div className="flex h-[693px] shrink-0 flex-col border-r border-b border-[#b4b4b4] bg-[linear-gradient(to_right,#fff_247px,#d9d9d9_247px,#d9d9d9_248px,#fff_248px)]">
                {rows.map((r, i) => <TreeRow key={i} r={r} />)}
              </div>
              <div className="flex h-[4px] shrink-0 items-center justify-center pl-[3px]">
                <div className="h-[2px] w-4 bg-[radial-gradient(#aaa_0.8px,transparent_0.9px)] bg-[size:3px_2px]" />
              </div>
              <div className="flex h-[78px] shrink-0 flex-col border border-l-0 border-[#b4b4b4] bg-white pt-[3px] pl-[4px]">
                <T w={33} className="self-start font-bold">Goal</T>
                <div className="mt-[15px] flex">
                  <T w={350.500}>Displays a geometry_msgs::PoseStamped message. </T>
                  <T w={121.500} className="text-[#0000ee] underline underline-offset-2">More Information</T>
                  <T w={4}>.</T>
                </div>
              </div>
              <div className="mt-[6px] flex gap-[6px] pl-px">
                <PanelButton label="Add" w={27} />
                <PanelButton label="Duplicate" w={65} disabled />
                <PanelButton label="Remove" w={55} disabled />
                <PanelButton label="Rename" w={56} disabled />
              </div>
            </div>
            {/* splitter */}
            <div className="flex w-[22px] shrink-0 items-center justify-end pr-[5px]">
              <svg viewBox="0 0 5 8" className="h-2 w-[5px]"><path d="M5 0v8L.5 4z" fill="#444" /></svg>
            </div>
            <View3D />
            <div className="flex h-[833px] w-4 items-center justify-center rounded-[3px] border border-[#b5b5b5] bg-[#dcdcdc]">
              <svg viewBox="0 0 5 8" className="h-2 w-[5px]"><path d="M4.500 0v8L.5 4z" fill="#444" /></svg>
            </div>
          </div>
          {/* status line */}
          <div className="flex h-[28px] shrink-0 items-center pl-[2px]">
            <div className="mt-px flex h-[24px] w-[54px] items-center justify-center rounded-[3px] border border-[#ababab] bg-linear-to-b from-white to-[#ececec]"><T w={39}>Reset</T></div>
            <div className="mb-[2px] ml-[5px] flex">
              <T w={77.500} className="font-bold">Left-Click: </T>
              <T w={53.500}>Rotate. </T>
              <T w={97} className="font-bold">Middle-Click: </T>
              <T w={72}>Move X/Y. </T>
              <T w={186} className="font-bold">Right-Click/Mouse Wheel:</T>
              <T w={7}>: </T>
              <T w={46}>Zoom. </T>
              <T w={35} className="font-bold">Shift</T>
              <T w={7}>: </T>
              <T w={95}>More options.</T>
            </div>
            <T w={33} className="mr-0 mb-[7px] ml-auto">5 fps</T>
          </div>
        </div>
      </div>

      {/* VM status bar */}
      <div className="flex h-[22px] shrink-0 items-center justify-end gap-[3.100px] bg-[#3b3d3f] pr-[2px] text-white">
        {statusIcons}
        <T w={45} className="ml-px pt-[2px] text-[11.500px]">Right Ctrl</T>
      </div>

      {/* host taskbar */}
      <div className="flex h-[30px] shrink-0 items-center bg-[#101010] text-white">
        <div className="flex w-9 justify-center">
          <svg viewBox="0 0 16 16" className="size-4" fill="#fff"><path d="M0 2.200L6.700 1.300v6.300H0zM7.500 1.200L16 0v7.600H7.500zM0 8.400h6.700v6.300L0 13.800zM7.500 8.400H16V16l-8.500-1.200z" /></svg>
        </div>
        <div className="flex h-[30px] w-[258px] items-center border border-[#5d5d5d] bg-[#3a3a3a] pl-[11px]">
          <svg viewBox="0 0 16 16" className="size-4" fill="none" stroke="#e4e4e4" strokeWidth="1.200"><circle cx="10" cy="6" r="5" /><path d="M6.500 9.700L.7 15.500" /></svg>
          <T w={44} className="ml-[12px] text-[13px] text-[#d6d6d6]">Search</T>
          <svg viewBox="0 0 58 28" className="mr-0 ml-auto h-7 w-[58px]">
            <path d="M0 28q2-5 12-7h32l14 2v5z" fill="#dfb37e" />
            <path d="M8 10l7 2 9-4 7 12-10 4-10 1z" fill="#e8e9ee" />
            <path d="M8 10l7 2 6 12-10 1z" fill="#cfe3c8" />
            <path d="M12 12l6 10M16 13l8-3 5 9" stroke="#7b9c85" fill="none" />
            <path d="M28 4l3 2-7 11-3 1v-4z" fill="#f2a33a" /><path d="M28 3l3 2-1.500 2.500-3-2z" fill="#e8554b" />
            <path d="M36 21V9q0-8 7.500-8T51 9v12q0 3-3 3h-9q-3 0-3-3z" fill="#1c8df4" />
            <path d="M41 2q0-2 2.500-2T46 2" stroke="#0c5cba" fill="none" strokeWidth="1.500" />
            <rect x="37" y="14" width="13" height="7" rx="2" fill="#0f6ddb" /><path d="M39 10h9" stroke="#7ac3ff" />
          </svg>
        </div>
        <div className="ml-[2px] flex">
          <TaskIcon><svg viewBox="0 0 16 16" className="size-4"><path d="M5 3V1.500q0-1 1-1h4q1 0 1 1V3" fill="none" stroke="#31a6e8" strokeWidth="1.300" /><rect x=".5" y="3" width="15" height="12.500" rx="1.500" fill="#fff" /><path d="M4.500 5.500h3.200v3.200H4.500z" fill="#f35325" /><path d="M8.300 5.500h3.200v3.200H8.300z" fill="#81bc06" /><path d="M4.500 9.300h3.200v3.200H4.500z" fill="#05a6f0" /><path d="M8.300 9.300h3.200v3.200H8.300z" fill="#ffba08" /></svg></TaskIcon>
          <TaskIcon><svg viewBox="0 0 16 16" className="size-4"><path d="M0 1.500h6L7.500 3H16v11H0z" fill="#f7c23c" /><path d="M0 4.500h16v9.500H0z" fill="#fdd662" /><path d="M3 15V9.500q0-1 1-1h8q1 0 1 1V15h-2.500v-3h-5v3z" fill="#3b8fdc" /></svg></TaskIcon>
          <TaskIcon><FaOpera className="size-[16px] text-[#8e1535]" /></TaskIcon>
          <TaskIcon>
            <div className="flex size-4 flex-col text-center text-[5px] leading-[8px] font-bold">
              <div className="h-2 bg-[#e8402f]"><T w={15}>VOICE</T></div>
              <div className="h-2 bg-[#35454f]"><T w={15}>MEETER</T></div>
            </div>
          </TaskIcon>
          <TaskIcon><span className="flex size-4 items-center justify-center rounded-full bg-[#5865f2]"><FaDiscord className="size-[10px] text-white" /></span></TaskIcon>
          <TaskIcon><svg viewBox="0 0 16 16" className="size-4"><circle cx="8" cy="8" r="8" fill="#1a82cf" /><path d="M0 8Q1 0 8 0q8 0 8 6.500 0 4-4 4-3 0-2-2Q11 4 6 4 2 4 0 8z" fill="#45c9a4" /><path d="M6 7q-2 7 7 7-5 4-10 0-3-5 3-7z" fill="#1262b3" /><path d="M9.500 9.500Q11 5.500 7 6q-2 3 1 6 3 2 6.500-.5-3 .5-5-2z" fill="#101c2b" fillOpacity=".5" /></svg></TaskIcon>
          <TaskIcon><FaSpotify className="size-4 text-[#1ed760]" /></TaskIcon>
          <TaskIcon><svg viewBox="0 0 16 16" className="size-4"><circle cx="8" cy="8" r="8" fill="#f9c916" /><path d="M1.100 4A8 8 0 0115 4H8l-3.500 6z" fill="#e33b2e" /><path d="M1.100 4A8 8 0 008 16l3.500-6H4.600z" fill="#1da04e" /><circle cx="8" cy="8" r="3.800" fill="#fff" /><circle cx="8" cy="8" r="3" fill="#3c7ff0" /></svg></TaskIcon>
          <TaskIcon active><svg viewBox="0 0 16 16" className="size-4"><path d="M8 .5l6 3-1 8.500-5 3.500L3 12 2 3.500z" fill="#123a63" stroke="#c9dcf0" strokeWidth=".8" /><path d="M3.500 4L8 7.500 12.500 4M8 7.500V14" stroke="#fff" strokeWidth="1.600" fill="none" /></svg></TaskIcon>
          <TaskIcon active><VmIcon className="size-4" /></TaskIcon>
        </div>
        <div className="ml-auto flex items-center">
          <svg viewBox="0 0 24 22" className="mr-[20px] h-[22px] w-6"><circle cx="12" cy="12" r="9.500" fill="#f8a11d" /><path d="M2 8q-2-4 2-4 1-4 5-2 3-1 3 2 3 0 2 4z" fill="#bcd3f3" /><path d="M12 20q-2-4 2-4 2-5 6-1 4 0 3 5z" fill="#c9d9f8" /><circle cx="18" cy="6" r="6" fill="#d0281e" /><text x="18" y="9" fontSize="8.500" fill="#fff" textAnchor="middle">1</text></svg>
          <svg viewBox="0 0 12 8" className="mr-[10px] h-2 w-3"><path d="M1 7l5-5.500L11 7" fill="none" stroke="#fff" strokeWidth="1.200" /></svg>
          <svg viewBox="0 0 18 14" className="mr-[7px] h-[14px] w-[18px]" fill="none" stroke="#fff"><path d="M7 5.500h9v7H7M17.300 7.500v3M6 12.500h1M2 1v3M5 1v3M1 4h5v2.500l-1 1.500H2L1 6.500zM3.500 8v4.500H6" /><path d="M8.500 7.500h5v3.500h-5z" fill="#fff" stroke="none" /></svg>
          <svg viewBox="0 0 18 14" className="mr-[10px] h-[14px] w-[18px]" fill="none" stroke="#fff"><path d="M1 5h2.500l4-3.500v11L3.500 9H1zM9.500 5q1.500 2 0 4M11.500 3q3 4 0 8" /><path d="M13.700 1q4 6 0 12" stroke="#888" /></svg>
          <svg viewBox="0 0 14 14" className="mr-[9px] h-[14px] w-[14px]" fill="none" stroke="#fff"><circle cx="12" cy="12.500" r="1" fill="#fff" stroke="none" /><path d="M8.500 13Q9 9.500 13 9M5.500 13Q6 7 13 6" /><path d="M2.500 13Q3 4.500 13 3.500M.5 12Q1 2 13 1" stroke="#aaa" /></svg>
          <T w={23} className="mr-[13px] text-[12px]">ENG</T>
          <T w={27} className="mr-[18px] text-[12px]">16:36</T>
          <svg viewBox="0 0 16 16" className="mr-[20px] size-4"><path d="M0 .5h16v12h-6L8 15.500 6 12.500H0z" fill="#fff" /><path d="M2.500 3.500h11M2.500 6.500h11M2.500 9.500h7" stroke="#111" /></svg>
          <div className="mr-1 h-[30px] w-px bg-[#4d4d4d]" />
        </div>
      </div>
    </div>
  );
}
